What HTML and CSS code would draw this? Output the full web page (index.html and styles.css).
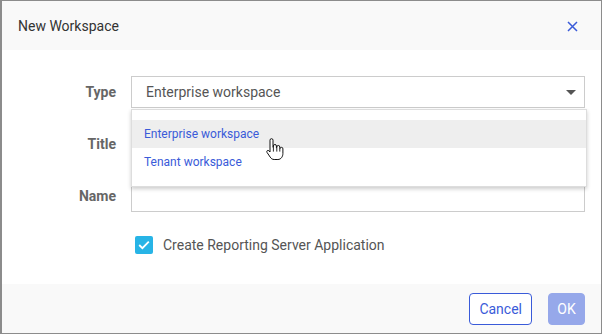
FILE: index.html
```html
<!DOCTYPE html>
<html lang="en">
<head>
    <meta charset="UTF-8">
    <title>New Workspace</title>
    <link rel="stylesheet" href="styles.css">
</head>
<body>
    <div class="dialog">
        <!-- Header -->
        <div class="dialog-header">
            <span class="dialog-title">New Workspace</span>
            <svg class="close-icon" width="11" height="11" viewBox="0 0 11 11">
                <path d="M1 1L10 10M10 1L1 10" stroke="#3a5bd9" stroke-width="1.5" fill="none"/>
            </svg>
        </div>

        <!-- Form -->
        <div class="dialog-body">
            <div class="form-grid">
                <label class="field-label">Type</label>
                <div class="select-wrap">
                    <div class="select-box">
                        <span>Enterprise workspace</span>
                        <span class="select-arrow"></span>
                    </div>
                    <ul class="dropdown">
                        <li class="dropdown-item active">Enterprise workspace</li>
                        <li class="dropdown-item">Tenant workspace</li>
                    </ul>
                    <svg class="hand-cursor" width="19" height="23" viewBox="0 0 19 23">
                        <path d="M5 2.2a1.5 1.5 0 0 1 3 0V9.5h.4V8a1.5 1.5 0 0 1 3 0v1.8h.4V9a1.5 1.5 0 0 1 3 0v1.6h.3a1.4 1.4 0 0 1 2.8.3V15.5c0 3.2-2 6-5 6H9.2c-2 0-3.1-1-4-2.4L2 14.4c-.8-1.3.7-2.6 1.8-1.7L5 14Z" fill="#fff" stroke="#111" stroke-width="1" stroke-linejoin="round"/>
                        <path d="M8.4 9.6v4M11.8 9.8v3.8M14.8 10.6v3" stroke="#111" stroke-width="0.9"/>
                    </svg>
                </div>

                <label class="field-label">Title</label>
                <div class="text-input"></div>

                <label class="field-label">Name</label>
                <div class="text-input"></div>
            </div>

            <div class="checkbox-row">
                <span class="checkbox">
                    <svg width="12" height="10" viewBox="0 0 12 10">
                        <path d="M1.2 5L4.4 8.2L10.8 1.6" stroke="#fff" stroke-width="1.8" fill="none"/>
                    </svg>
                </span>
                <span class="checkbox-label">Create Reporting Server Application</span>
            </div>
        </div>

        <!-- Footer -->
        <div class="dialog-footer">
            <button class="btn btn-outline">Cancel</button>
            <button class="btn btn-primary">OK</button>
        </div>
    </div>
</body>
</html>
```

FILE: styles.css
```css
/* Theme colors */
:root {
    --color-blue: #3a5bd9;
    --color-blue-light: #96a8ea;
    --color-check: #27b4e6;
    --color-border: #cccccc;
    --color-panel: #f9f9f9;
    --color-text: #555555;
}

* {
    margin: 0;
    padding: 0;
    box-sizing: border-box;
}

body {
    font-family: Roboto, "Liberation Sans", sans-serif;
    background: #ffffff;
    width: 604px;
    height: 334px;
    overflow: hidden;
}

/* Dialog frame */
.dialog {
    width: 602px;
    height: 334px;
    border: 1px solid #8c8c8c;
    border-left-width: 2px;
    display: flex;
    flex-direction: column;
    background: #ffffff;
}

.dialog-header {
    height: 49px;
    flex-shrink: 0;
    background: var(--color-panel);
    display: flex;
    align-items: center;
    justify-content: space-between;
    padding: 0 23px 0 16px;
}

.dialog-title {
    font-size: 14px;
    color: #333333;
}

.close-icon {
    margin-top: 2px;
}

/* Form */
.dialog-body {
    flex: 1;
    padding: 26px 16px 0 0;
}

.form-grid {
    display: grid;
    grid-template-columns: 114px 1fr;
    column-gap: 15px;
    row-gap: 20px;
    align-items: center;
}

.field-label {
    text-align: right;
    font-size: 14px;
    font-weight: bold;
    color: #666666;
}

.select-wrap {
    position: relative;
}

.select-box,
.text-input {
    height: 32px;
    border: 1px solid var(--color-border);
    background: #ffffff;
}

.select-box {
    display: flex;
    align-items: center;
    justify-content: space-between;
    padding: 0 8px 0 14px;
    font-size: 14px;
    color: var(--color-text);
}

.select-arrow {
    width: 0;
    height: 0;
    border-left: 5px solid transparent;
    border-right: 5px solid transparent;
    border-top: 5px solid #555555;
}

/* Open dropdown list */
.dropdown {
    position: absolute;
    top: 33px;
    left: 0;
    right: -2px;
    list-style: none;
    background: #ffffff;
    border: 1px solid #dddddd;
    box-shadow: 0 2px 4px rgba(0, 0, 0, 0.2);
    padding: 10px 0;
    z-index: 2;
}

.dropdown-item {
    height: 28px;
    line-height: 28px;
    padding-left: 12px;
    font-size: 12px;
    color: var(--color-blue);
}

.dropdown-item.active {
    background: #eeeeee;
}

.hand-cursor {
    position: absolute;
    left: 134px;
    top: 62px;
    z-index: 3;
}

/* Checkbox */
.checkbox-row {
    display: flex;
    align-items: center;
    gap: 10px;
    margin: 24px 0 0 133px;
}

.checkbox {
    width: 18px;
    height: 18px;
    border-radius: 2px;
    background: var(--color-check);
    display: flex;
    align-items: center;
    justify-content: center;
}

.checkbox-label {
    font-size: 14px;
    color: var(--color-text);
}

/* Footer */
.dialog-footer {
    height: 49px;
    flex-shrink: 0;
    background: var(--color-panel);
    display: flex;
    align-items: center;
    justify-content: flex-end;
    gap: 16px;
    padding: 0 16px 0 0;
}

.btn {
    height: 32px;
    border-radius: 4px;
    font-family: inherit;
    font-size: 14px;
    padding: 0 9px;
}

.btn-outline {
    background: #ffffff;
    border: 1px solid var(--color-blue);
    color: var(--color-blue);
}

.btn-primary {
    background: var(--color-blue-light);
    border: 1px solid var(--color-blue-light);
    color: #ffffff;
    width: 37px;
    padding: 0;
}
```
